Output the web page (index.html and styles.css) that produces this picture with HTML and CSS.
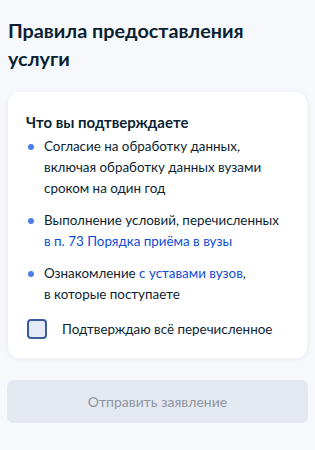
FILE: index.html
```html
<!DOCTYPE html>
<html lang="ru">
<head>
  <meta charset="UTF-8">
  <meta name="viewport" content="width=device-width, initial-scale=1">
  <title>Правила предоставления услуги</title>
  <link rel="stylesheet" href="styles.css">
</head>
<body>

<h1 class="page-title">Правила предоставления услуги</h1>

<div class="card">
  <h2 class="card-title">Что вы подтверждаете</h2>
  <ul class="rules">
    <li>Согласие на обработку данных, включая обработку данных вузами сроком на один год</li>
    <li>Выполнение условий, перечисленных<br><a href="#">в&nbsp;п.&nbsp;73 Порядка приёма в вузы</a></li>
    <li>Ознакомление <a href="#">с уставами вузов</a>,<br>в которые поступаете</li>
  </ul>
  <label class="confirm">
    <span class="box"></span>
    Подтверждаю всё перечисленное
  </label>
</div>

<button class="submit" disabled>Отправить заявление</button>

</body>
</html>
```

FILE: styles.css
```css
body {
  font-family: Lato, 'Noto Sans', sans-serif;
  background: #f6f8fc;
  margin: 0;
  padding: 16px 7px 20px;
  color: #0b1f33;
}

.page-title {
  font-size: 19.8px;
  font-weight: 700;
  line-height: 28px;
  margin: 0 0 0 1px;
  padding-right: 40px;
  color: #0b1f33;
}

.card {
  background: white;
  border-radius: 12px;
  box-shadow: 0 1px 6px rgba(11, 31, 51, 0.06);
  margin: 20px 1px 0;
  padding: 20px 18px 19px;
}

.card-title {
  font-size: 15px;
  font-weight: 700;
  line-height: 20px;
  margin: 0 0 4px;
}

.rules {
  list-style: none;
  margin: 0;
  padding: 0;
}

.rules li {
  position: relative;
  font-size: 13.4px;
  line-height: 21px;
  padding-left: 18px;
  margin-bottom: 11px;
}

.rules li::before {
  content: '';
  position: absolute;
  left: 2px;
  top: 8px;
  width: 6px;
  height: 6px;
  border-radius: 50%;
  background: #4e7fe6;
}

.rules a {
  color: #0d4cd3;
  text-decoration: none;
}

.confirm {
  display: flex;
  align-items: center;
  gap: 15px;
  font-size: 13.4px;
  margin-top: 14px;
  padding-left: 1px;
}

.box {
  width: 16px;
  height: 16px;
  border: 2px solid #3c5b9c;
  border-radius: 4px;
  background: #e4eaf7;
}

.submit {
  display: block;
  width: 100%;
  height: 43px;
  margin-top: 22px;
  border: none;
  border-radius: 7px;
  background: #e4e8f1;
  color: #8d95a3;
  font-family: inherit;
  font-size: 14px;
}
```
